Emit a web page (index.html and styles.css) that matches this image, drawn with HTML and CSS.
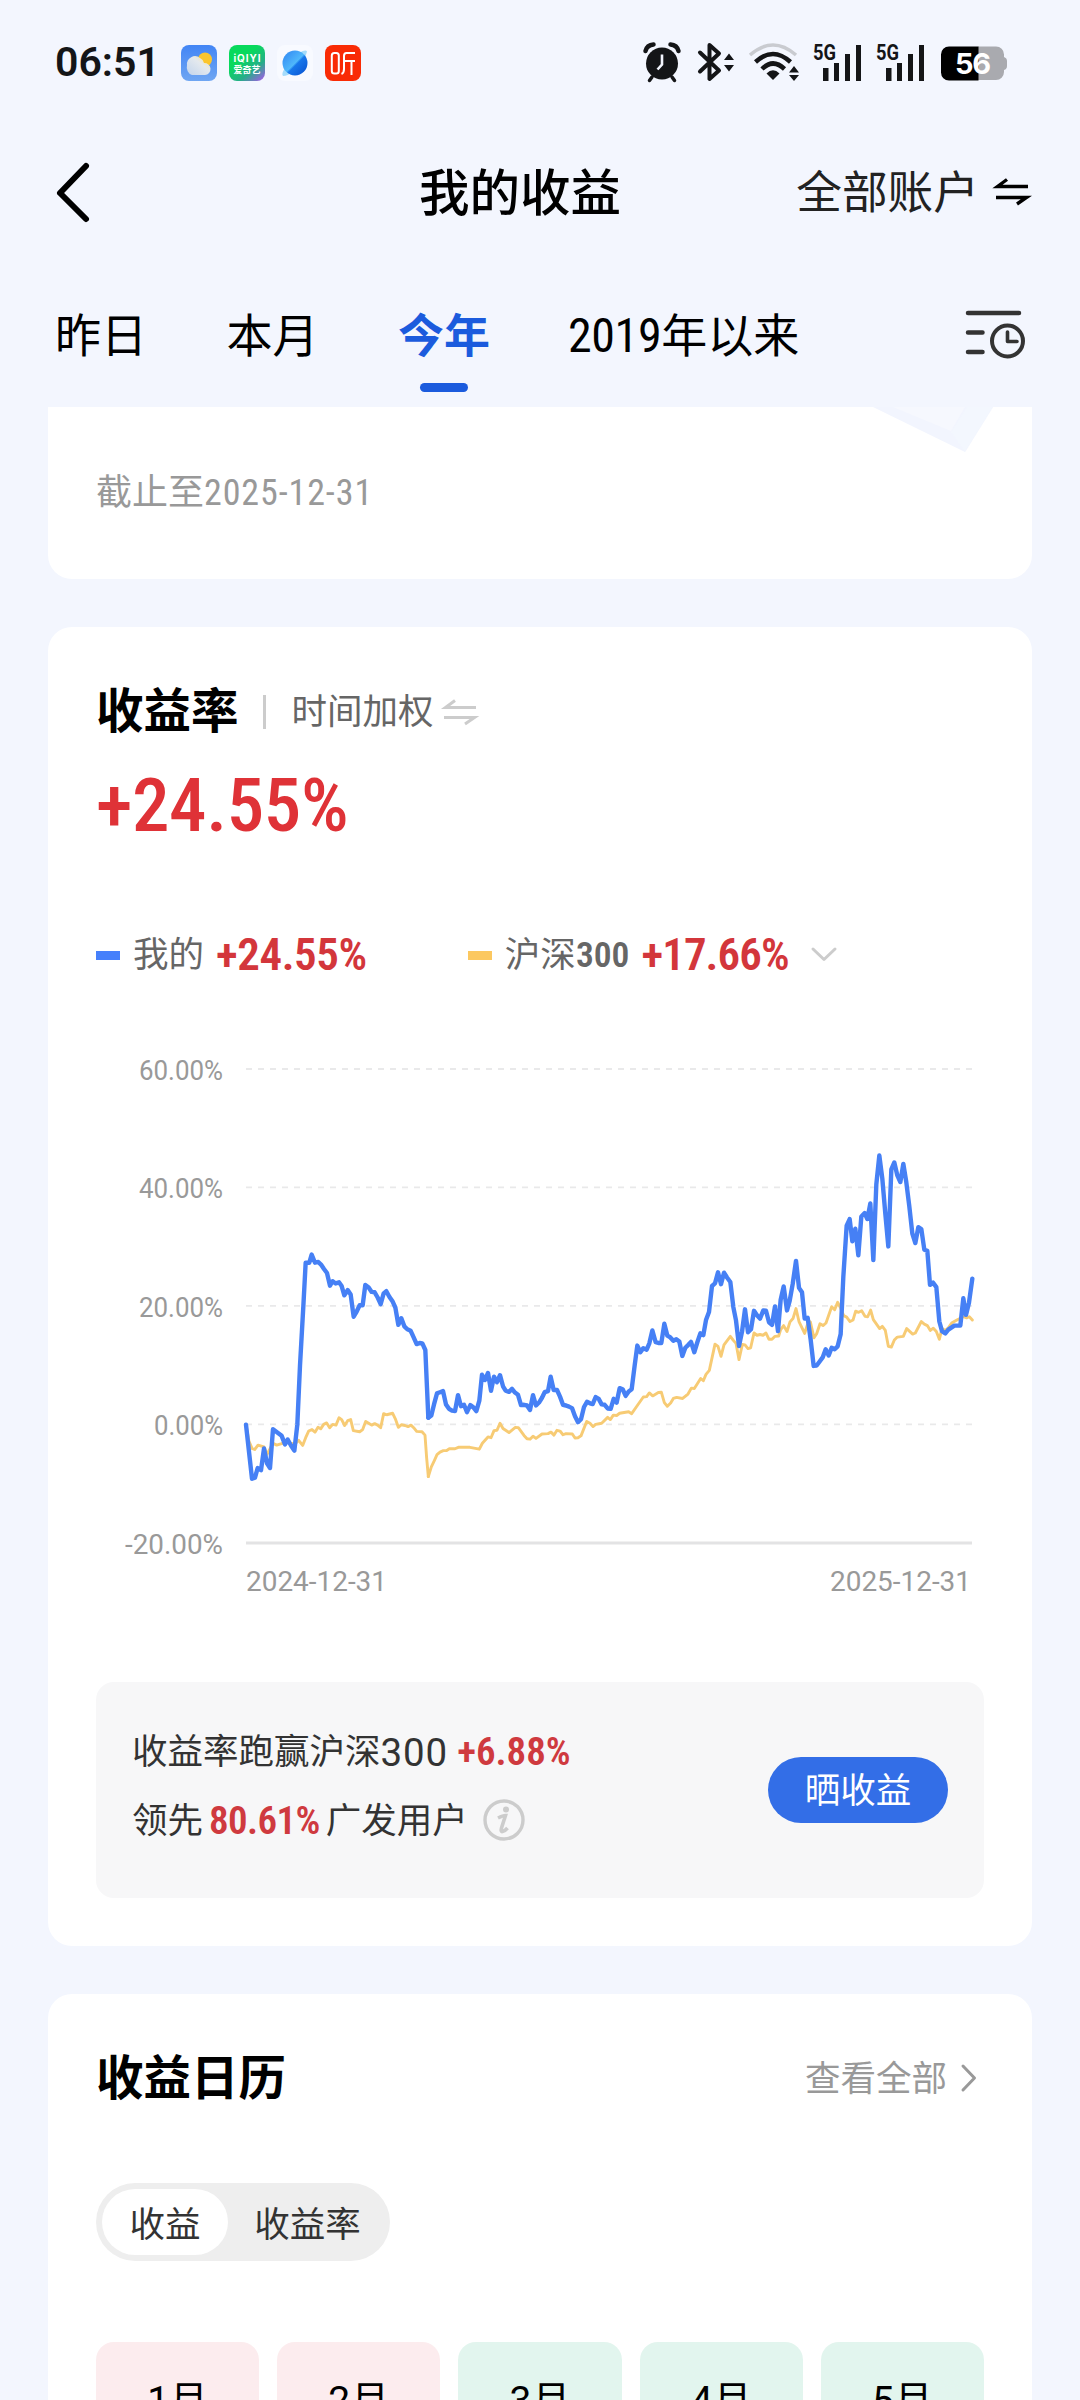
FILE: index.html
```html
<!DOCTYPE html>
<html lang="zh-CN">
<head>
<meta charset="utf-8">
<title>我的收益</title>
<link rel="stylesheet" href="styles.css">
</head>
<body>
<div class="screen">
  <header class="status">
    <span class="time">06:51</span>
    <div class="apps">
      <svg width="36" height="36" viewBox="0 0 36 36">
        <defs>
          <linearGradient id="sky" x1="0" y1="0" x2="0" y2="1"><stop offset="0" stop-color="#4285f5"/><stop offset="1" stop-color="#6fa6f2"/></linearGradient>
          <linearGradient id="cloud" x1="1" y1="0" x2="0" y2="1"><stop offset="0" stop-color="#ffe48a"/><stop offset=".4" stop-color="#e4e9ee"/><stop offset="1" stop-color="#c3d5ec"/></linearGradient>
        </defs>
        <rect width="36" height="36" rx="8" fill="url(#sky)"/>
        <circle cx="24" cy="14.500" r="7" fill="#fbc52c"/>
        <path d="M11 30a6.800 8 0 0 1-5-10 8 8 0 0 1 13-7 7 7 0 0 1 4 5 6 6 0 0 1 1 12z" fill="url(#cloud)"/>
      </svg>
      <svg width="36" height="36" viewBox="0 0 36 36">
        <defs><linearGradient id="iq" x1=".2" y1="0" x2="1" y2="1"><stop offset=".3" stop-color="#08d95c"/><stop offset=".65" stop-color="#25ae88"/><stop offset="1" stop-color="#b052f0"/></linearGradient></defs>
        <rect width="36" height="36" rx="8" fill="url(#iq)"/>
        <text x="18" y="16.500" class="iq-latin" textLength="27">iQIYI</text>
        <text x="18" y="27.500" class="iq-cjk" textLength="27">爱奇艺</text>
      </svg>
      <svg width="36" height="36" viewBox="0 0 36 36">
        <defs>
          <linearGradient id="planet" x1="0" y1="0" x2="1" y2="1"><stop offset="0" stop-color="#2f84f2"/><stop offset=".5" stop-color="#4fb7fb"/><stop offset=".56" stop-color="#1877ea"/><stop offset="1" stop-color="#0750d0"/></linearGradient>
        </defs>
        <rect width="36" height="36" rx="8" fill="#f8faff"/>
        <path d="M22 8q7-4 8-1.500-1 4-3 8M8 23q-4 6-2 8 5 0 9-4" fill="#a5dcfb"/>
        <circle cx="18" cy="18" r="12.500" fill="url(#planet)"/>
      </svg>
      <svg width="36" height="36" viewBox="0 0 36 36">
        <rect width="36" height="36" rx="8" fill="#f92b05"/>
        <g fill="none" stroke="#fff" stroke-width="2">
          <rect x="6.800" y="8" width="7" height="20.500" rx="2.500"/>
          <path d="M30 8h-8.500q-2.500 0-2.500 3v13q0 4-2.500 5M19 16h11M26.500 16v14"/>
        </g>
      </svg>
    </div>
    <div class="signals">
      <svg class="alarm" width="38" height="40" viewBox="0 0 38 40">
        <circle cx="19" cy="21.500" r="16" fill="#141517"/>
        <path d="M2.500 9Q4 3 10.500 2.500M27.500 2.500Q34 3 35.500 9" fill="none" stroke="#141517" stroke-width="4.500" stroke-linecap="round"/>
        <path d="M9 35l-2.500 3.500M29 35l2.500 3.500" stroke="#141517" stroke-width="3.500" stroke-linecap="round"/>
        <path d="M19 12.500v10l-4.500 5" fill="none" stroke="#f3f6fe" stroke-width="2.600"/>
      </svg>
      <svg width="38" height="40" viewBox="0 0 38 40">
        <path d="M3 10.500l19 18L12.500 37V3L22 11.500 3 29.500" fill="none" stroke="#141517" stroke-width="4" stroke-linejoin="round" stroke-linecap="round"/>
        <path d="M27 18h10l-5-6.500zM27 23h10l-5 6.500z" fill="#141517"/>
      </svg>
      <svg width="52" height="40" viewBox="0 0 52 40">
        <g fill="none" stroke="#141517" stroke-width="4.500">
          <path d="M2 13Q25 -7 48 13" stroke="#c9cbd0" stroke-width="3.500"/>
          <path d="M7.500 20Q25 4 42.500 20M14 27Q25 16 36.500 27"/>
        </g>
        <path d="M18.500 31.500Q25 25 31.500 31.500L25 38z" fill="#141517"/>
        <path d="M41 30.500h10L46 24zM41 33h10l-5 6z" fill="#141517"/>
      </svg>
      <svg width="50" height="40" viewBox="0 0 50 40">
        <text x="0" y="17.500" class="net" textLength="23" lengthAdjust="spacingAndGlyphs">5G</text>
        <path d="M10 26h5.500v13H10zM21 21h5v18h-5zM32 12h5v27h-5zM43 3h5v36h-5z" fill="#141517"/>
      </svg>
      <svg class="sim2" width="50" height="40" viewBox="0 0 50 40">
        <text x="0" y="17.500" class="net" textLength="23" lengthAdjust="spacingAndGlyphs">5G</text>
        <path d="M10 26h5.500v13H10zM21 21h5v18h-5zM32 12h5v27h-5zM43 3h5v36h-5z" fill="#141517"/>
      </svg>
      <svg width="67" height="40" viewBox="0 0 67 40">
        <path d="M8 4.500h47a8 8 0 0 1 8 8v2.500q3 1 3 4v5q0 3-3 4v2a8 8 0 0 1-8 8H37v-33.500z" fill="#a9aaaf"/>
        <path d="M37.500 4.500v34H8a8 8 0 0 1-8-8v-18a8 8 0 0 1 8-8z" fill="#000"/>
        <text x="14" y="31.500" class="battery" textLength="36">56</text>
      </svg>
    </div>
  </header>

  <nav class="nav">
    <svg class="back" width="34" height="60" viewBox="0 0 34 60"><path d="M30 4L4 31l26 26" fill="none" stroke="#000" stroke-width="6" stroke-linecap="round" stroke-linejoin="round"/></svg>
    <h1>我的收益</h1>
    <div class="account"><span>全部账户</span>
      <svg width="34" height="28" viewBox="0 0 34 28"><path d="M12 2.500L2.500 9.500H33M1 20.500h30.500L22 27" fill="none" stroke="#000" stroke-width="3.400"/></svg>
    </div>
  </nav>

  <div class="tabs">
    <span class="tab">昨日</span>
    <span class="tab">本月</span>
    <span class="tab active">今年</span>
    <span class="tab"><span class="year">2019</span>年以来</span>
    <svg class="period" width="62" height="50" viewBox="0 0 62 50"><g fill="none" stroke="#333" stroke-width="4.500" stroke-linecap="round"><path d="M3 4h51M3 23.500h14.500M3 43h14.500"/><circle cx="42.500" cy="32" r="15.500" stroke-width="4"/><path d="M42.500 23v9.500H52" stroke-width="3.600" stroke-linejoin="round"/></g></svg>
  </div>

  <main>
    <section class="card summary">
      <p class="asof">截止至<span class="narrow date">2025-12-31</span></p>
      <svg class="deco" width="120" height="48" viewBox="0 0 120 48"><path d="M0 0h120L92 45z" fill="#f2f5fe"/><path d="M20 0h72L78 24z" fill="#f6f8fe"/><path d="M94 0h26L92 45 78 25z" fill="#f3f7fe"/></svg>
    </section>

    <section class="card rate">
      <div class="rate-head">
        <h2>收益率</h2><i class="divider"></i><span class="method">时间加权</span>
        <svg width="34" height="28" viewBox="0 0 34 28"><path d="M12 2.500L2.500 9.500H33M1 19.500h30.500L22 26" fill="none" stroke="#ccc" stroke-width="3"/></svg>
      </div>
      <div class="big narrow">+24.55%</div>
      <div class="legend">
        <i class="key mine"></i><span class="name">我的</span><b class="narrow">+24.55%</b>
        <i class="key index"></i><span class="name">沪深<span class="narrow code">300</span></span><b class="narrow tight">+17.66%</b>
        <svg class="down" width="26" height="16" viewBox="0 0 26 16"><path d="M2 2l11 10.500L24 2" fill="none" stroke="#ccc" stroke-width="3" stroke-linecap="round" stroke-linejoin="round"/></svg>
      </div>
      <svg class="chart" width="888" height="580" viewBox="96 0 888 580">
        <g stroke="#e9e9ea" stroke-width="1.800" stroke-dasharray="6 6">
          <path d="M246 29H972M246 147.300H972M246 265.900H972M246 384.300H972"/>
        </g>
        <path d="M246 503H972" stroke="#e3e3e4" stroke-width="3"/>
        <g class="axis">
          <text x="139" y="39.500" textLength="84" lengthAdjust="spacingAndGlyphs">60.00%</text>
          <text x="139" y="158" textLength="84" lengthAdjust="spacingAndGlyphs">40.00%</text>
          <text x="139" y="276.500" textLength="84" lengthAdjust="spacingAndGlyphs">20.00%</text>
          <text x="154" y="394.500" textLength="69" lengthAdjust="spacingAndGlyphs">0.00%</text>
          <text x="125" y="513.500" textLength="98" lengthAdjust="spacingAndGlyphs">-20.00%</text>
          <text x="246" y="551" textLength="141" lengthAdjust="spacingAndGlyphs">2024-12-31</text>
          <text x="830" y="551" textLength="141" lengthAdjust="spacingAndGlyphs">2025-12-31</text>
        </g>
        <g fill="none" stroke-linejoin="round" stroke-linecap="round">
          <g transform="translate(100 0) scale(.33333 .36995)">
            <polyline class="line-index" points="438,1040 447,1085 456,1104 464,1107 474,1095 492,1100 501,1120 519,1090 530,1095 545,1091 560,1085 570,1090 585,1092 596,1082 608,1096 617,1075 626,1057 636,1053 645,1060 654,1047 662,1051 671,1039 680,1035 689,1048 698,1039 708,1041 717,1021 725,1026 734,1042 743,1029 752,1026 760,1056 779,1059 788,1053 797,1031 806,1036 815,1041 824,1037 833,1041 842,1048 851,1010 860,1013 878,1009 886,1024 895,1047 904,1040 915,1042 924,1045 933,1041 941,1048 950,1058 966,1059 975,1068 980,1130 985,1180"/>
            <polyline class="line-mine" points="438,1040 456,1186 465,1183 473,1157 483,1163 492,1104 501,1144 510,1157 519,1052 535,1063 545,1070 555,1093 563,1080 573,1096 583,1110 592,1039 600,880 610,720 617,602 628,602 635,580 645,602 655,600 663,607 672,619 681,630 690,664 698,652 707,658 717,655 725,665 733,690 743,676 752,688 761,748 770,734 779,717 788,717 796,662 806,669 815,681 824,682 833,696 842,714 851,685 859,679 868,694 878,707 886,723 895,770 904,752 913,774 922,782 932,786 941,804 950,822 959,819 967,820 976,838 981,940 985,1021"/>
          </g>
          <g transform="translate(420 0) scale(.33333 .36995)">
            <polyline class="line-index" points="25,1180 34,1154 43,1137 51,1121 60,1114 70,1110 79,1110 88,1105 105,1105 115,1101 150,1101 178,1106 187,1090 204,1073 213,1075 222,1056 231,1055 240,1036 249,1050 267,1061 286,1047 295,1048 312,1069 321,1078 330,1079 339,1071 348,1077 366,1065 384,1064 393,1060 402,1068 411,1055 420,1057 429,1067 438,1064 457,1065 465,1076 474,1075 483,1070 500,1031 510,1036 519,1045 527,1039 545,1036 563,1020 571,1026 580,1014 590,1015 599,1009 626,1005 635,1010 652,988 670,965 680,964 688,954 698,962 715,953 724,952 733,980 742,990 752,981 760,969 770,966 788,969 804,957 814,941 823,942 842,915 850,921 858,904 868,893 885,822 894,828 903,855 912,824 931,801 940,812 948,820 957,864 967,823 975,824 984,834 992,832 1002,792 1011,798 1020,796 1029,798 1038,792 1047,809 1056,809 1065,801 1076,800 1082,783 1091,772 1101,788 1110,762 1119,753 1128,726 1137,761 1154,793 1162,770 1171,762 1182,805 1190,794 1200,767 1209,772 1218,765 1235,721 1244,729 1253,709 1262,725 1271,745 1280,749 1290,761 1299,757 1307,733 1316,736 1325,732 1335,747 1343,748 1352,730 1360,756 1379,780 1387,774 1396,785 1405,828 1414,830 1423,811 1432,803 1450,801 1460,780 1478,795 1486,792 1504,761 1513,768 1522,772 1531,785 1540,779 1549,788 1558,809 1566,780 1576,785 1585,778 1595,765 1612,756 1630,748 1640,751 1648,748 1657,757"/>
            <polyline class="line-mine" points="25,1021 34,1015 42,985 51,955 60,952 69,949 78,985 87,997 96,1002 105,1003 114,960 123,990 132,986 141,1006 151,987 160,993 169,1003 178,975 186,905 195,919 204,900 213,948 222,910 231,925 240,906 249,936 257,948 267,951 276,943 285,953 294,959 303,987 312,986 321,988 330,1000 339,960 348,988 357,980 366,967 374,952 384,949 392,910 401,946 411,946 420,964 429,986 438,988 447,991 456,995 465,1017 474,1033 483,1025 492,992 501,978 510,982 518,984 527,965 536,970 545,985 554,986 563,996 572,997 581,970 590,980 599,941 608,944 617,962 626,950 635,944 644,880 652,826 661,844 670,833 680,837 688,820 697,785 707,817 715,819 724,819 733,767 742,799 751,804 760,813 769,809 778,815 787,854 796,832 805,824 813,816 823,844 832,817 841,793 850,798 858,757 867,735 876,665 885,658 894,628 903,660 912,629 921,642 931,654 940,722 948,758 957,827 966,789 975,728 984,790 993,782 1002,732 1011,744 1020,753 1030,731 1038,732 1047,763 1056,770 1065,720 1074,787 1082,702 1091,666 1101,731 1109,705 1118,660 1128,597 1137,670 1146,682 1154,753 1163,751 1172,810 1181,881 1190,880 1199,869 1208,858 1217,836 1226,853 1235,832 1244,836 1253,828 1262,795 1270,640 1280,502 1289,484 1297,544 1306,510 1315,582 1324,477 1334,468 1342,484 1351,442 1360,595 1369,390 1378,312 1387,375 1396,470 1405,558 1414,350 1423,331 1432,366 1441,384 1450,335 1459,385 1468,450 1477,523 1486,549 1495,506 1504,511 1513,567 1522,570 1530,662 1539,656 1549,668 1558,761 1566,787 1576,793 1585,783 1603,772 1621,772 1630,698 1638,743 1647,710 1657,645"/>
          </g>
        </g>
      </svg>
      <div class="panel">
        <div class="facts">
          <p>收益率跑赢沪深<span class="plain">300</span><b class="narrow">+6.88%</b></p>
          <p>领先<b class="narrow lead">80.61%</b>广发用户<svg width="42" height="42" viewBox="0 0 42 42"><circle cx="21" cy="21" r="19" fill="none" stroke="#ccc" stroke-width="3.400"/><circle cx="23" cy="10.500" r="3" fill="#ccc"/><path d="M15 19q5-2.500 7.500-2.500L18.500 29q-1 4 1 3.500 2.500-.5 5-3.500" fill="none" stroke="#ccc" stroke-width="3.600"/></svg></p>
        </div>
        <span class="share">晒收益</span>
      </div>
    </section>

    <section class="card calendar">
      <div class="cal-head">
        <h2>收益日历</h2>
        <span class="all">查看全部</span>
        <svg width="16" height="28" viewBox="0 0 16 28"><path d="M2 2l11.500 12L2 26" fill="none" stroke="#999" stroke-width="3" stroke-linecap="round" stroke-linejoin="round"/></svg>
      </div>
      <div class="toggle"><span class="on">收益</span><span>收益率</span></div>
      <div class="months">
        <div class="month up">1月</div>
        <div class="month up">2月</div>
        <div class="month dn">3月</div>
        <div class="month dn">4月</div>
        <div class="month dn">5月</div>
      </div>
    </section>
  </main>
</div>
</body>
</html>
```
FILE: styles.css
```css
* { box-sizing: border-box; }
body { margin: 0; background: #f3f6fe; font-family: Roboto, "Noto Sans CJK SC", sans-serif; color: #000; }
h1, h2, p { margin: 0; }
svg { display: block; flex: none; overflow: visible; }
.screen { width: 1080px; height: 2400px; overflow: hidden; display: flex; flex-direction: column; white-space: nowrap; }
.narrow { font-stretch: 87%; }

.status { height: 124px; padding: 0 72px 0 55px; display: flex; align-items: center; flex: none; }
.time { font-size: 41px; font-weight: 600; color: #141517; width: 126px; line-height: 60px; }
.apps { display: flex; gap: 12px; flex: 1; padding-top: 2px; }
.iq-latin { font: 700 10px Inter, sans-serif; fill: #fff; text-anchor: middle; }
.iq-cjk { font: 700 9px "Noto Sans CJK SC", sans-serif; fill: #fff; text-anchor: middle; }
.signals { display: flex; gap: 13px; }
.alarm { margin-right: 3px; }
.sim2 { margin-right: 2px; }
.net { font: 700 22px Roboto, sans-serif; fill: #141517; }
.battery { font: 700 29px Inter, sans-serif; fill: #fff; }

.nav { height: 136px; padding: 4px 51px 0 56px; display: flex; align-items: center; flex: none; }
.back { margin-bottom: 5px; }
.nav h1 { margin-left: 329px; font-size: 50.500px; font-weight: 500; line-height: 76px; flex: 1; }
.account { display: flex; align-items: center; gap: 16px; font-size: 45.700px; line-height: 60px; color: #222; }
.account svg { margin-bottom: 6px; }

.tabs { height: 147px; padding: 46px 53px 0 55px; display: flex; align-items: flex-start; font-size: 46px; line-height: 60px; flex: none; }
.tab { margin-right: 79.500px; }
.year { font-size: 48px; font-stretch: 87%; letter-spacing: -.4px; }
.active { color: #1b5bdd; font-weight: 700; display: flex; flex-direction: column; align-items: center; margin-right: 78px; }
.active::after { content: ""; width: 48px; height: 9px; border-radius: 5px; background: #1b5bdd; margin-top: 17px; }
.period { margin: 3px 0 0 auto; }

.card { margin: 0 48px 48px; background: #fff; border-radius: 24px; }
.summary { position: relative; height: 172px; border-radius: 0 0 24px 24px; padding: 0 48px; display: flex; align-items: center; }
.asof { font-size: 36px; color: #999; line-height: 50px; }
.date { letter-spacing: .9px; }
.deco { position: absolute; right: 39px; top: 0; }

.rate { padding: 53px 48px 48px; height: 1319px; }
h2 { font-size: 47.500px; font-weight: 700; line-height: 64px; }
.rate-head { display: flex; align-items: center; height: 64px; line-height: 64px; }
.divider { width: 3px; height: 34px; background: #ccc; margin: 0 26px 0 24px; }
.method { font-size: 35.500px; color: #666; margin-right: 9px; }
.big { margin-top: 21px; height: 80px; font-size: 75px; line-height: 80px; font-weight: 500; letter-spacing: -.4px; color: #df3237; }
.legend { margin-top: 85px; height: 50px; display: flex; align-items: center; line-height: 50px; }
.key { width: 24px; height: 9px; margin-right: 13px; }
.key.mine { background: #4680fb; }
.key.index { background: #fcc860; margin-left: 101px; }
.name { font-size: 35.500px; color: #666; margin-right: 12px; }
.code { font-weight: 600; }
.legend b { font-size: 45px; font-weight: 600; letter-spacing: -.4px; color: #d3363b; }
.legend .tight { letter-spacing: -.9px; }
.down { margin-left: 22px; }
.chart { margin-top: 60px; }
.axis { font: 28px Roboto, sans-serif; fill: #999; }
.line-index, .line-mine { vector-effect: non-scaling-stroke; }
.line-index { stroke: #f7cb74; stroke-width: 2.900; }
.line-mine { stroke: #4680f5; stroke-width: 4.400; }

.panel { margin-top: 62px; height: 216px; border-radius: 18px; background: #f7f7f8; padding: 36px; display: flex; align-items: center; justify-content: space-between; }
.facts { align-self: flex-start; font-size: 35.500px; color: #333; }
.facts p { display: flex; align-items: center; height: 69px; line-height: 69px; }
.facts b { font-size: 39px; font-weight: 600; color: #cf3a3f; margin-left: 9px; }
.facts .lead { margin: 0 6px; letter-spacing: -.6px; }
.facts svg { margin-left: 15px; margin-bottom: 3px; }
.plain { font-size: 38.500px; letter-spacing: .9px; }
.share { width: 180px; height: 66px; border-radius: 33px; background: #336ee7; color: #fff; font-size: 35.500px; line-height: 68px; text-align: center; }

.calendar { padding: 53px 48px 0; height: 440px; flex: none; }
.cal-head { display: flex; align-items: center; height: 64px; line-height: 64px; }
.all { margin: 0 14px 0 auto; font-size: 35.500px; color: #999; }
.cal-head svg { margin-right: 7px; margin-bottom: 2px; }
.toggle { margin-top: 72px; width: 294px; height: 78px; padding: 6px; border-radius: 39px; background: #eee; display: flex; font-size: 35.500px; line-height: 72px; color: #333; text-align: center; }
.toggle span { flex: 1; padding-left: 3px; }
.toggle .on { flex: 0 0 126px; height: 66px; border-radius: 33px; background: #fff; padding: 0; }
.months { margin-top: 81px; display: grid; grid-template-columns: repeat(5, 1fr); gap: 18px; }
.month { height: 140px; border-radius: 18px; padding-top: 32px; font-size: 39px; line-height: 54px; text-align: center; }
.up { background: #fcecee; }
.dn { background: #e2f5ee; }
```
